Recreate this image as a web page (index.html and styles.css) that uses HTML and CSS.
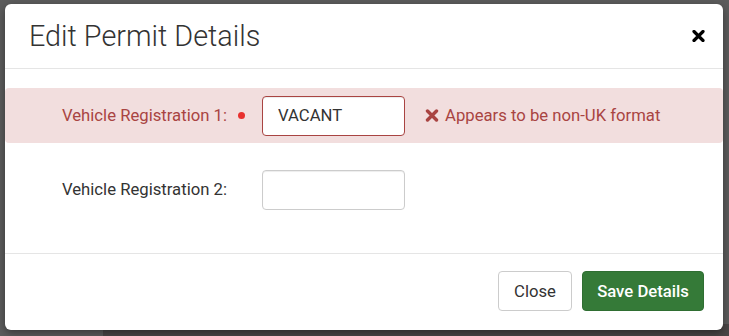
FILE: index.html
```html
<!DOCTYPE html>
<html lang="en">
<head>
<meta charset="utf-8">
<title>Edit Permit Details</title>
<link rel="stylesheet" href="styles.css">
</head>
<body>
<div class="modal">
  <div class="modal-header">
    <h4 class="modal-title">Edit Permit Details</h4>
    <button class="close" type="button" aria-label="Close">
      <svg width="13" height="12" viewBox="0 0 13 12"><path d="M2 1.5 L11 10.5 M11 1.5 L2 10.5" stroke="#000" stroke-width="3.2" stroke-linecap="round"/></svg>
    </button>
  </div>
  <div class="modal-body">
    <div class="form-row has-error">
      <label class="form-label">Vehicle Registration 1:<span class="req-dot"></span></label>
      <input class="form-input" type="text" value="VACANT">
      <span class="help">
        <svg class="help-icon" width="14" height="13" viewBox="0 0 14 13"><path d="M2.5 2 L11.5 11 M11.5 2 L2.5 11" stroke="#a94442" stroke-width="3.4" stroke-linecap="round"/></svg>
        Appears to be non-UK format
      </span>
    </div>
    <div class="form-row">
      <label class="form-label">Vehicle Registration 2:</label>
      <input class="form-input" type="text" value="">
    </div>
  </div>
  <div class="modal-footer">
    <button class="btn btn-default" type="button">Close</button>
    <button class="btn btn-success" type="button">Save Details</button>
  </div>
</div>
<div class="page-behind">
  <p class="page-text">These allowances are currently valid until 30/06/2022</p>
</div>
</body>
</html>
```

FILE: styles.css
```css
html, body {
  margin: 0;
  padding: 0;
}
body {
  background: #5c5c5c;
  font-family: Roboto, "Liberation Sans", sans-serif;
  font-size: 16.7px;
  color: #333;
  height: 336px;
  overflow: hidden;
}
.modal {
  position: relative;
  z-index: 2;
  margin: 4px 6px 0 5px;
  height: 326px;
  box-sizing: border-box;
  background: #fff;
  border-radius: 6px;
  box-shadow: 0 3px 9px rgba(0,0,0,0.4);
  display: flex;
  flex-direction: column;
}
.modal-header {
  height: 65px;
  box-sizing: border-box;
  border-bottom: 1px solid #e5e5e5;
  display: flex;
  align-items: center;
  justify-content: space-between;
  padding: 0 18px 0 24px;
}
.modal-title {
  margin: 0;
  font-weight: 300;
  font-size: 28.8px;
  color: #333;
  line-height: 1;
  padding-top: 1px;
}
.close {
  border: 0;
  background: none;
  padding: 0;
  width: 13px;
  height: 12px;
  display: flex;
  cursor: pointer;
}
.modal-body {
  padding: 19px 0 17px;
  flex: 1;
}
.form-row {
  height: 55px;
  display: flex;
  align-items: center;
  border-radius: 4px;
  margin-bottom: 19px;
}
.form-row:last-child {
  margin-bottom: 0;
}
.form-label {
  width: 222px;
  text-align: right;
  position: relative;
  color: #333;
  margin-right: 35px;
}
.req-dot {
  position: absolute;
  right: -18px;
  top: 6px;
  width: 7px;
  height: 7px;
  border-radius: 50%;
  background: #e8312f;
}
.form-input {
  width: 143px;
  height: 40px;
  box-sizing: border-box;
  border: 1px solid #ccc;
  border-radius: 4px;
  padding: 0 15px;
  font-family: inherit;
  font-size: 16.7px;
  color: #333;
  background: #fff;
  box-shadow: inset 0 1px 1px rgba(0,0,0,0.075);
}
.has-error {
  background: #f2dede;
}
.has-error .form-label {
  color: #a94442;
}
.has-error .form-input {
  border-color: #a94442;
}
.help {
  margin-left: 20px;
  color: #a94442;
  display: flex;
  align-items: center;
  gap: 6px;
}
.help-icon {
  display: block;
}
.modal-footer {
  border-top: 1px solid #e5e5e5;
  height: 77px;
  box-sizing: border-box;
  display: flex;
  align-items: center;
  justify-content: flex-end;
  gap: 10px;
  padding: 0 19px 2px 0;
}
.btn {
  height: 40px;
  box-sizing: border-box;
  border-radius: 4px;
  font-family: inherit;
  font-size: 16.7px;
  padding: 0 12px;
  cursor: pointer;
}
.btn-default {
  background: #fff;
  border: 1px solid #ccc;
  color: #333;
  width: 74px;
}
.btn-success {
  background: #357a38;
  border: 1px solid #2f6e32;
  color: #fff;
  font-weight: 500;
  width: 122px;
}
.page-behind {
  margin-left: 103px;
  height: 40px;
  background: #4a4646;
  position: relative;
  top: -6px;
  z-index: 1;
}
.page-text {
  margin: 0;
  padding: 9px 0 0 19px;
  color: #5a2a2a;
  font-size: 18px;
}
```
